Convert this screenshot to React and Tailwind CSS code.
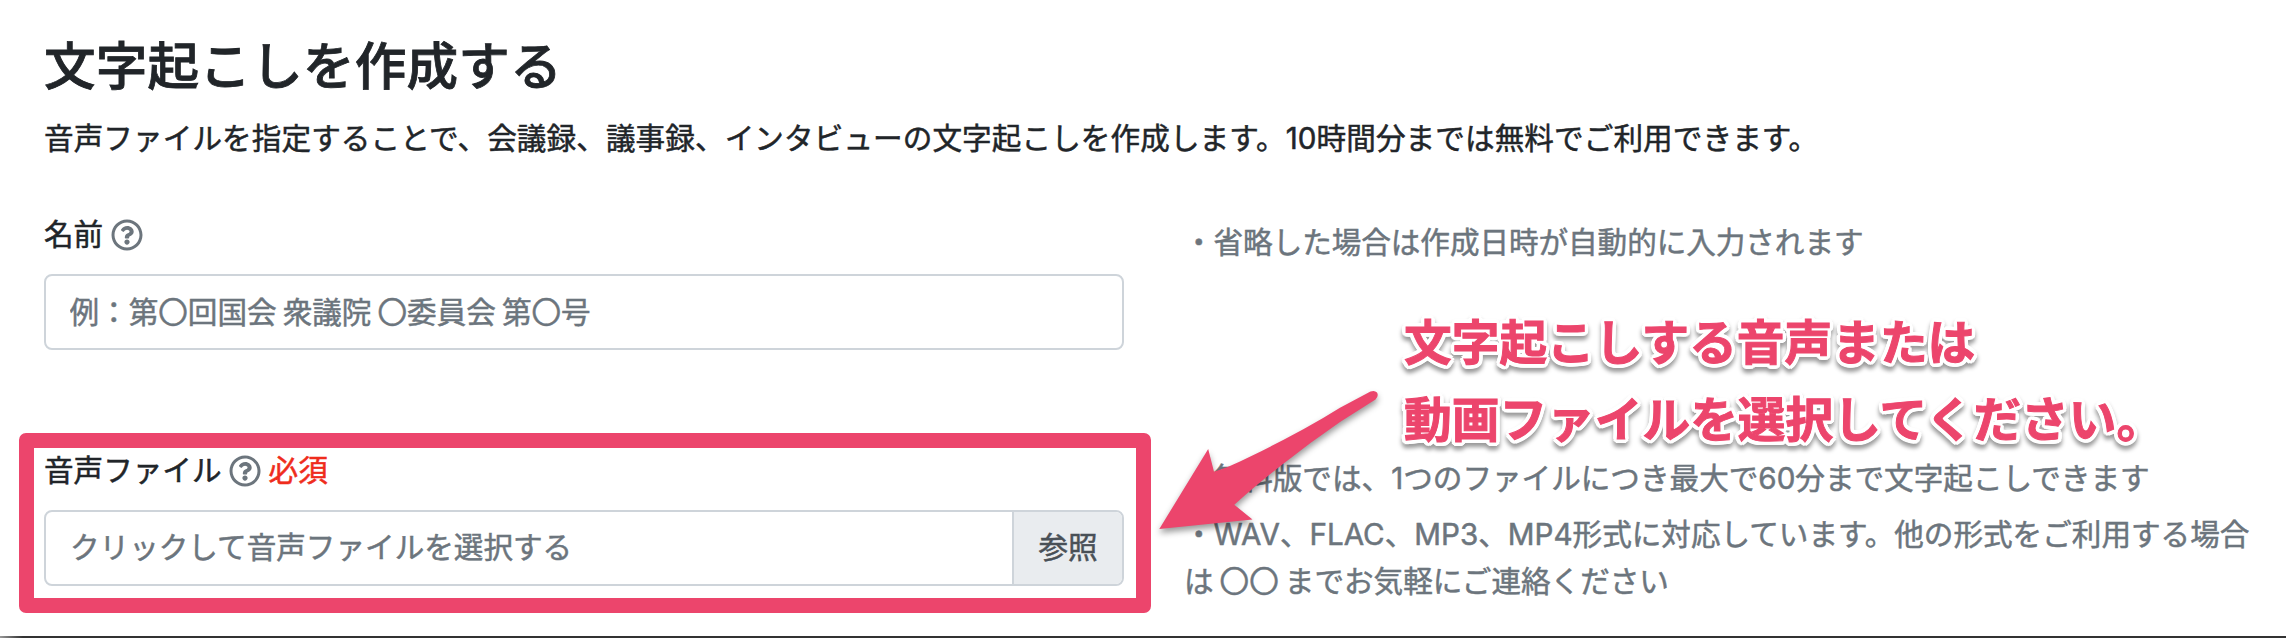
import { FaRegQuestionCircle } from "react-icons/fa";

function Label({ children, required }) {
  return (
    <label className="flex h-[44px] items-center">
      <span>{children}</span>
      <FaRegQuestionCircle className="ml-[7.5px] size-[32px] text-[#6c757d]" />
      {required && <span className="ml-[7.5px] text-[#ef2c1c]">必須</span>}
    </label>
  );
}

function Arrow() {
  return (
    <svg
      className="absolute left-[1140px] top-[370px] drop-shadow-[0_4px_3px_rgba(0,0,0,0.4)]"
      width="260"
      height="180"
      viewBox="1140 370 260 180"
    >
      <path
        d="M1159.3 529 L1208.2 449 L1214 471.8 Q1228 467.5 1240 461.5 Q1300 433 1340 407.8 L1370.5 391.6 Q1374.500 390 1377 392.500 Q1379 396 1375.500 399.500 L1340 422 Q1310 442.500 1281.700 465 Q1256 485 1234.300 504.800 L1252.500 519.500 Z"
        fill="#ec456c"
      />
    </svg>
  );
}

export default function App() {
  return (
    <div
      lang="ja"
      className="relative flex h-[638px] w-[2286px] flex-col overflow-hidden bg-white font-[Inter,'Noto_Sans_CJK_JP',sans-serif] text-[29.6px] leading-[47.5px] text-[#212529] [-webkit-text-stroke:0.5px_currentColor] [word-spacing:-2.3px]"
    >
      <header className="pl-[44px]">
        <h1 className="mt-[34px] h-[64px] text-[51.6px] font-medium leading-[64px] tracking-[0.2px] [-webkit-text-stroke:0.8px_currentColor]">
          文字起こしを作成する
        </h1>
        <p className="mt-[17px] whitespace-nowrap tracking-[0.09px]">
          音声ファイルを指定することで、会議録、議事録、インタビューの文字起こしを作成します。10時間分までは無料でご利用できます。
        </p>
      </header>

      <section className="mt-[50px] flex h-[236px] pl-[44px]">
        <div className="w-[1080px]">
          <Label>名前</Label>
          <input
            className="mt-[17px] block h-[76px] w-full rounded-[8px] border-2 border-[#ced4da] px-[23.5px] [word-spacing:-2.3px] placeholder:text-[#6c757d] placeholder:opacity-100"
            placeholder="例：第〇回国会 衆議院 〇委員会 第〇号"
          />
        </div>
        <p className="ml-[60px] mt-[6px] tracking-[-0.05px] text-[#6c757d]">・省略した場合は作成日時が自動的に入力されます</p>
      </section>

      <section className="flex pl-[44px]">
        <div className="w-[1080px]">
          <Label required>音声ファイル</Label>
          <div className="mt-[17px] flex h-[76px] overflow-hidden rounded-[8px] border-2 border-[#ced4da]">
            <div className="flex flex-1 items-center pl-[24px] text-[#6c757d]">クリックして音声ファイルを選択する</div>
            <button className="w-[110px] border-l-2 border-[#ced4da] bg-[#e9ecef] text-[#495057]">参照</button>
          </div>
        </div>
        <div className="ml-[60px] mt-[6px] whitespace-nowrap text-[#6c757d]">
          <p>・無料版では、1つのファイルにつき最大で60分まで文字起こしできます</p>
          <p className="mt-[8.5px]">
            ・WAV、FLAC、MP3、MP4形式に対応しています。他の形式をご利用する場合
            <br />は 〇〇 までお気軽にご連絡ください
          </p>
        </div>
      </section>

      <div className="absolute left-[19px] top-[433px] h-[180px] w-[1132px] rounded-[7px] border-[15px] border-[#ec456c]" />
      <Arrow />
      <p className="absolute left-[1404px] top-[304.5px] whitespace-nowrap text-[47.7px] font-bold leading-[77.3px] text-[#ec456c] drop-shadow-[0_4px_2px_rgba(0,0,0,0.4)] [-webkit-text-stroke:1px_#ec456c] [text-shadow:4px_0_white,3.7px_1.5px_white,2.8px_2.8px_white,1.5px_3.7px_white,0_4px_white,-1.5px_3.7px_white,-2.8px_2.8px_white,-3.7px_1.5px_white,-4px_0_white,-3.7px_-1.5px_white,-2.8px_-2.8px_white,-1.5px_-3.7px_white,0_-4px_white,1.5px_-3.7px_white,2.8px_-2.8px_white,3.7px_-1.5px_white,2px_0_white,-2px_0_white,0_2px_white,0_-2px_white]">
        文字起こしする音声または
        <br />
        動画ファイルを選択してください。
      </p>
      <div className="absolute bottom-0 left-0 h-[2px] w-full bg-linear-to-r from-[#999] via-[#333] via-[1%] to-[#333]" />
    </div>
  );
}
